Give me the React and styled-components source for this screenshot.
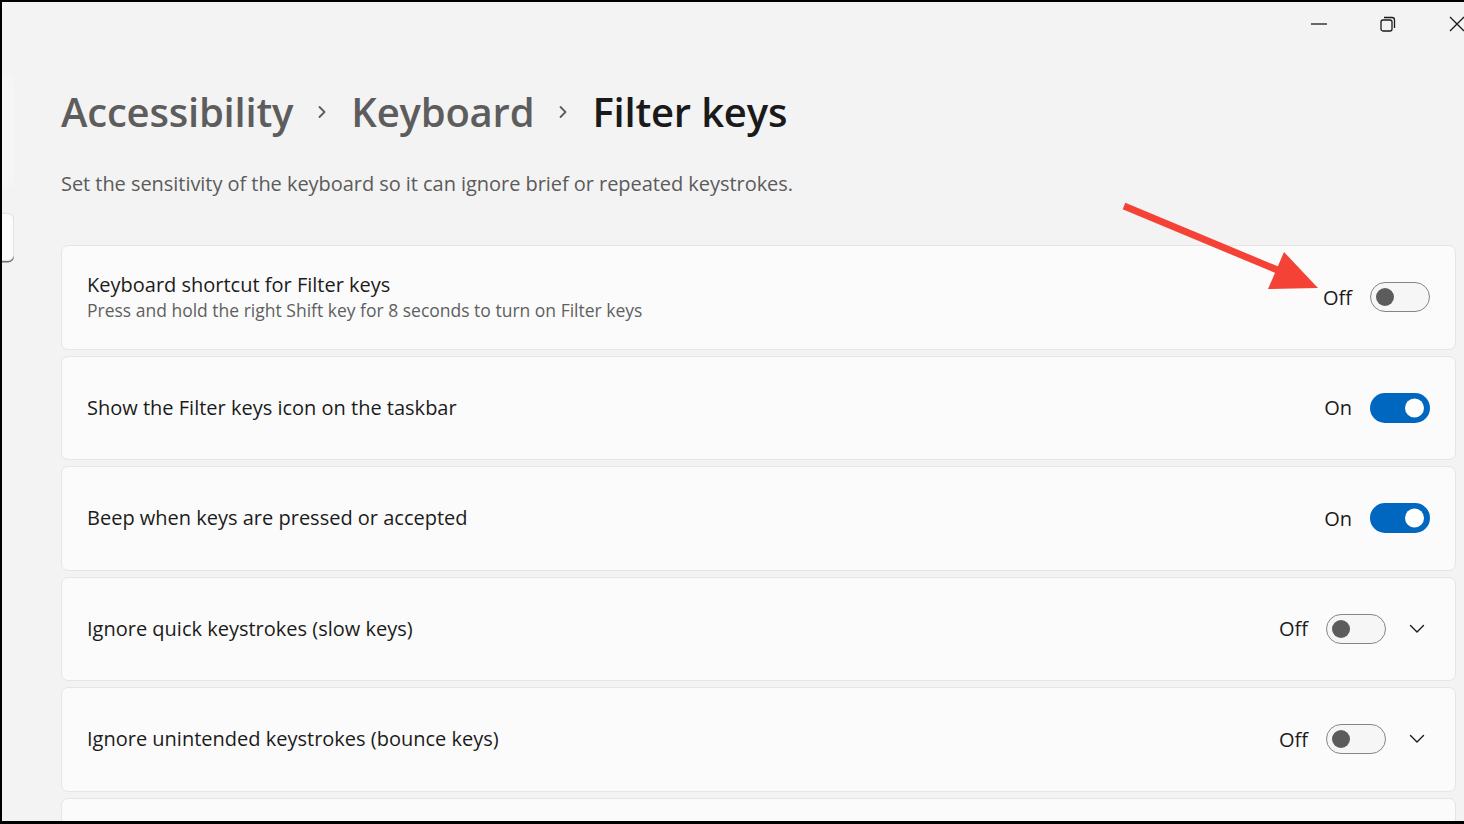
import React from 'react';
import styled, { createGlobalStyle } from 'styled-components';

const GlobalStyle = createGlobalStyle`
  html, body {
    margin: 0;
    padding: 0;
    background: #000;
  }
  * {
    box-sizing: border-box;
  }
`;

const Frame = styled.div`
  position: relative;
  width: 1464px;
  height: 824px;
  overflow: hidden;
  background: #f3f3f3;
  border-top: 2px solid #000;
  border-left: 2px solid #000;
  border-bottom: 3px solid #000;
  font-family: 'Open Sans', 'Noto Sans', sans-serif;
  color: #1b1b1b;
  display: grid;
  grid-template-columns: 12px 1fr;
  grid-template-rows: 44px 1fr;
`;

const TitleBar = styled.div`
  grid-column: 1 / 3;
  display: flex;
  justify-content: flex-end;
  align-items: center;
  margin-right: -27px;
`;

const WinButton = styled.div`
  width: 69px;
  height: 44px;
  display: flex;
  align-items: center;
  justify-content: center;
  color: #1b1b1b;
`;

const NavPeek = styled.div`
  display: flex;
  flex-direction: column;
  padding-top: 29px;
`;

const NavHover = styled.div`
  height: 112px;
  margin-left: -6px;
  border-radius: 6px;
  background: #f5f5f5;
`;

const NavItem = styled.div`
  height: 48px;
  margin-top: 26px;
  margin-left: -6px;
  background: #fbfbfb;
  border: 1px solid #e3e3e3;
  border-radius: 6px;
  box-shadow: 0 1.5px 0 #6e6e6e;
`;

const Main = styled.main`
  padding-left: 47px;
  padding-right: 8px;
`;

const Breadcrumb = styled.h1`
  display: flex;
  align-items: center;
  gap: 24px;
  margin: 40px 0 0;
  font-size: 40px;
  font-weight: 600;
  line-height: 52px;
  letter-spacing: -0.2px;
`;

const Crumb = styled.span`
  color: ${p => (p.$current ? '#1a1a1a' : '#5d5d5d')};
`;

const CrumbSep = styled.span`
  display: flex;
  align-items: center;
  color: #5d5d5d;
`;

const Subtitle = styled.p`
  margin: 33px 0 0;
  font-size: 20px;
  line-height: 26px;
  color: #5b5b5b;
  letter-spacing: -0.05px;
`;

const CardList = styled.div`
  display: flex;
  flex-direction: column;
  gap: 6px;
  margin-top: 48px;
`;

const Card = styled.div`
  height: 104.5px;
  display: flex;
  align-items: center;
  justify-content: space-between;
  padding: 0 25px 0 25px;
  background: #fbfbfb;
  border: 1.5px solid #e5e5e5;
  border-radius: 7px;
`;

const CardText = styled.div`
  display: flex;
  flex-direction: column;
`;

const CardTitle = styled.div`
  font-size: 20px;
  line-height: 26px;
  color: #1b1b1b;
`;

const CardDesc = styled.div`
  font-size: 17.5px;
  line-height: 24px;
  color: #5f5f5f;
`;

const Controls = styled.div`
  display: flex;
  align-items: center;
`;

const StateLabel = styled.span`
  font-size: 20px;
  color: #1b1b1b;
  margin-right: 18px;
`;

const Toggle = styled.div`
  position: relative;
  width: 60px;
  height: 30px;
  border-radius: 15px;
  background: ${p => (p.$on ? '#0067c0' : '#f6f6f6')};
  border: ${p => (p.$on ? 'none' : '1.5px solid #858585')};

  &::after {
    content: '';
    position: absolute;
    top: 50%;
    left: ${p => (p.$on ? '35px' : '5px')};
    width: ${p => (p.$on ? '19px' : '18px')};
    height: ${p => (p.$on ? '19px' : '18px')};
    transform: translateY(-50%);
    border-radius: 50%;
    background: ${p => (p.$on ? '#ffffff' : '#5c5c5c')};
  }
`;

const Expand = styled.div`
  width: 20px;
  margin-left: 21px;
  margin-right: 3px;
  display: flex;
  justify-content: center;
  color: #1b1b1b;
`;

const Annotation = styled.svg`
  position: absolute;
  left: 0;
  top: 0;
  pointer-events: none;
`;

const Chevron = () => (
  <svg width="16" height="10" viewBox="0 0 16 10">
    <path d="M1.5 1.5 L8 8 L14.5 1.5" fill="none" stroke="currentColor" strokeWidth="1.4" strokeLinecap="round" strokeLinejoin="round" />
  </svg>
);

const CrumbChevron = () => (
  <svg width="10" height="16" viewBox="0 0 10 16">
    <path d="M2.5 3 L7.5 8 L2.5 13" fill="none" stroke="currentColor" strokeWidth="1.8" strokeLinecap="round" strokeLinejoin="round" />
  </svg>
);

const rows = [
  { title: 'Keyboard shortcut for Filter keys', desc: 'Press and hold the right Shift key for 8 seconds to turn on Filter keys', on: false },
  { title: 'Show the Filter keys icon on the taskbar', on: true },
  { title: 'Beep when keys are pressed or accepted', on: true },
  { title: 'Ignore quick keystrokes (slow keys)', on: false, expand: true },
  { title: 'Ignore unintended keystrokes (bounce keys)', on: false, expand: true },
  { title: '', on: null },
];

const App = () => (
  <>
    <GlobalStyle />
    <Frame>
      <TitleBar>
        <WinButton>
          <svg width="16" height="2" viewBox="0 0 16 2">
            <path d="M0 1 H16" stroke="currentColor" strokeWidth="1.3" />
          </svg>
        </WinButton>
        <WinButton>
          <svg width="16" height="16" viewBox="0 0 16 16" fill="none" stroke="currentColor" strokeWidth="1.3">
            <rect x="1" y="4" width="11" height="11" rx="2" />
            <path d="M4 1.5 H12 A2.5 2.5 0 0 1 14.5 4 V12" />
          </svg>
        </WinButton>
        <WinButton>
          <svg width="16" height="16" viewBox="0 0 16 16" stroke="currentColor" strokeWidth="1.3">
            <path d="M1 1 L15 15 M15 1 L1 15" />
          </svg>
        </WinButton>
      </TitleBar>
      <NavPeek>
        <NavHover />
        <NavItem />
      </NavPeek>
      <Main>
        <Breadcrumb>
          <Crumb>Accessibility</Crumb>
          <CrumbSep>
            <CrumbChevron />
          </CrumbSep>
          <Crumb>Keyboard</Crumb>
          <CrumbSep>
            <CrumbChevron />
          </CrumbSep>
          <Crumb $current>Filter keys</Crumb>
        </Breadcrumb>
        <Subtitle>Set the sensitivity of the keyboard so it can ignore brief or repeated keystrokes.</Subtitle>
        <CardList>
          {rows.map((r, i) => (
            <Card key={i}>
              <CardText>
                <CardTitle>{r.title}</CardTitle>
                {r.desc && <CardDesc>{r.desc}</CardDesc>}
              </CardText>
              {r.on !== null && (
                <Controls>
                  <StateLabel>{r.on ? 'On' : 'Off'}</StateLabel>
                  <Toggle $on={r.on} />
                  {r.expand && (
                    <Expand>
                      <Chevron />
                    </Expand>
                  )}
                </Controls>
              )}
            </Card>
          ))}
        </CardList>
      </Main>
      <Annotation width="1464" height="824" viewBox="0 0 1464 824">
        <path d="M1122 204 L1285 272" stroke="#f44336" strokeWidth="7" strokeLinecap="butt" />
        <path d="M1316 286 L1266 287 L1282 250 Z" fill="#f44336" />
      </Annotation>
    </Frame>
  </>
);

export default App;
